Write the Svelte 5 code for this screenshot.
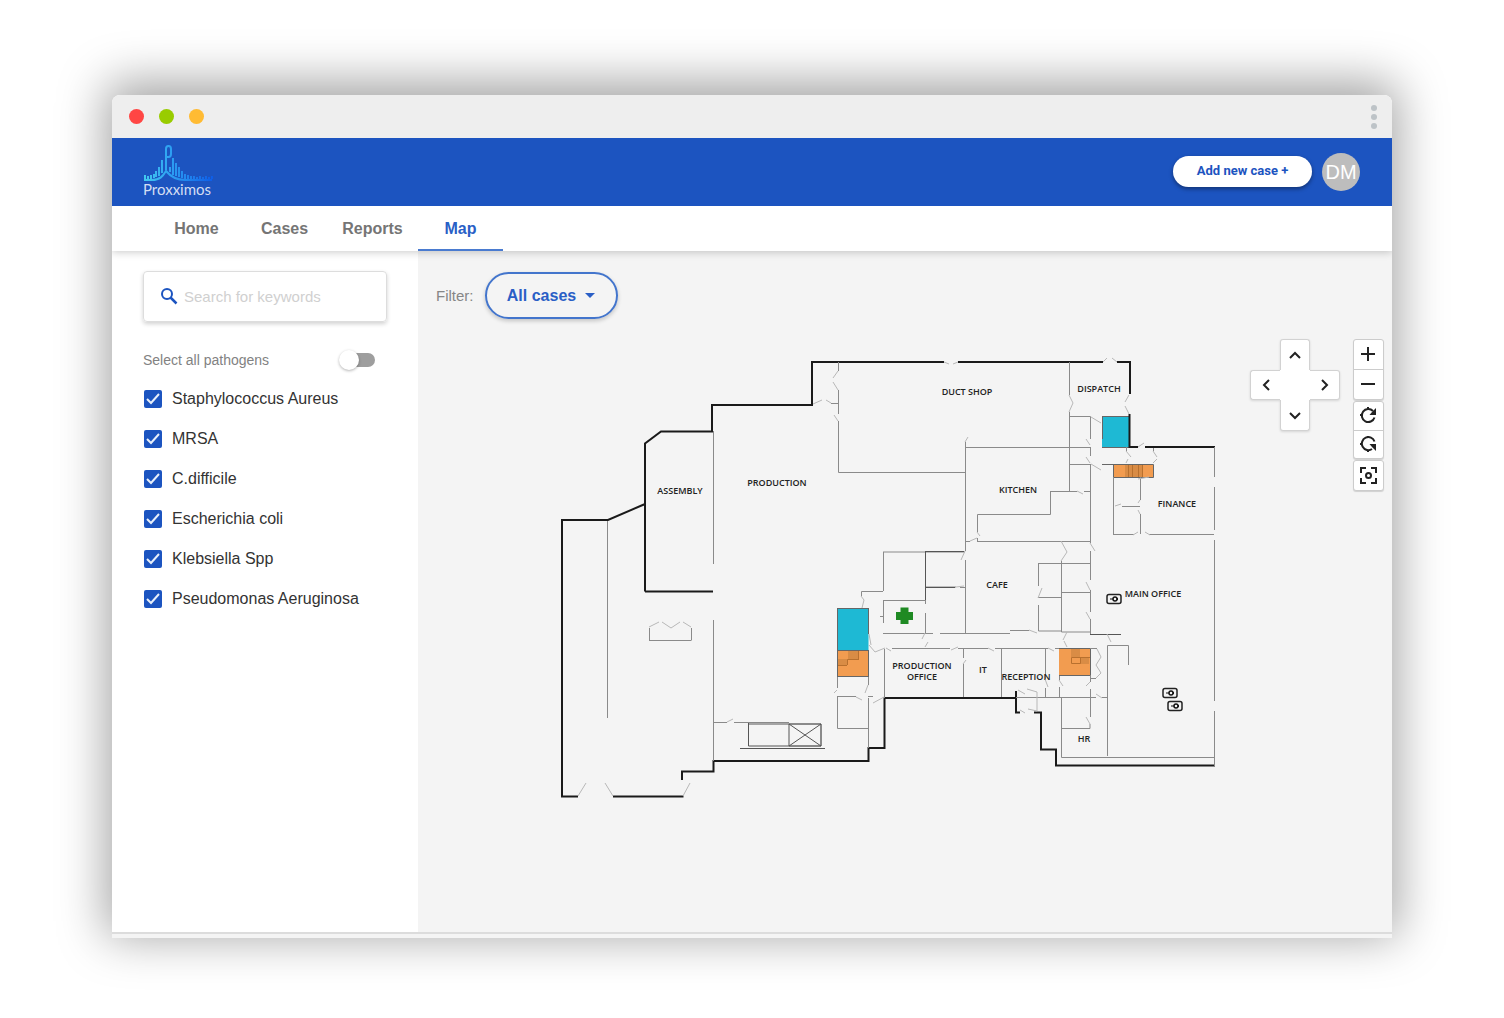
<script>
  const tabs = ['Home', 'Cases', 'Reports', 'Map'];
  let activeTab = $state('Map');
  let allSelected = $state(false);
  let pathogens = $state([
    { name: 'Staphylococcus Aureus', on: true },
    { name: 'MRSA', on: true },
    { name: 'C.difficile', on: true },
    { name: 'Escherichia coli', on: true },
    { name: 'Klebsiella Spp', on: true },
    { name: 'Pseudomonas Aeruginosa', on: true }
  ]);

  const rooms = [
    { name: 'ASSEMBLY', x: 680, y: 494 },
    { name: 'PRODUCTION', x: 777, y: 486 },
    { name: 'DUCT SHOP', x: 967, y: 395 },
    { name: 'DISPATCH', x: 1099, y: 392 },
    { name: 'KITCHEN', x: 1018, y: 493 },
    { name: 'FINANCE', x: 1177, y: 507 },
    { name: 'CAFE', x: 997, y: 588 },
    { name: 'MAIN OFFICE', x: 1153, y: 597 },
    { name: 'PRODUCTION', x: 922, y: 669 },
    { name: 'OFFICE', x: 922, y: 680 },
    { name: 'IT', x: 983, y: 673 },
    { name: 'RECEPTION', x: 1026, y: 680 },
    { name: 'HR', x: 1084, y: 742 }
  ];

  const cameras = [
    { x: 1114, y: 599 },
    { x: 1170, y: 693 },
    { x: 1175, y: 706 }
  ];
</script>

<div class="window">
  <div class="chrome">
    <div class="lights"><i class="red"></i><i class="green"></i><i class="amber"></i></div>
    <div class="kebab"><i></i><i></i><i></i></div>
  </div>

  <header>
    <a class="logo" href="#home" aria-label="Proxximos home">
      <svg viewBox="0 0 70 36" width="70" height="36" fill="none" aria-hidden="true">
        <defs>
          <linearGradient id="wave" gradientUnits="userSpaceOnUse" x1="0" y1="0" x2="70" y2="0">
            <stop offset="0" stop-color="#42c9ee" />
            <stop offset="0.4" stop-color="#2c9df2" />
            <stop offset="1" stop-color="#0d5be6" />
          </linearGradient>
        </defs>
        <g stroke="url(#wave)">
          <path stroke-width="2" d="M22 25V4Q22 1 24.500 1T27 4V9Q27 12 24.500 12H23" />
          <path stroke-width="2" d="M0 35H8C16 35 19 31 22 26C27 32 33 35 41 35H68" />
          <path stroke-width="2" d="M1 30V34M4 31V34M7 30V34M10 29V33M12 26V32M15 22V31M18 15V28M26 22V27M29 13V30M32 18V31M35 22V32M38 26V33M41 29V34M44 30V34M47 31V34M50 31V34M53 32V34M56 31V34M59 32V34M62 31V34M65 32V34M68 31V34" />
        </g>
      </svg>
      <span>Proxximos</span>
    </a>
    <button class="add">Add new case +</button>
    <button class="avatar" aria-label="Account DM">DM</button>
  </header>

  <nav>
    {#each tabs as tab}
      <a href={'#' + tab.toLowerCase()} class:active={tab === activeTab} onclick={() => (activeTab = tab)}>{tab}</a>
    {/each}
  </nav>

  <div class="body">
    <aside>
      <label class="search">
        <svg viewBox="0 0 18 18" width="18" height="18" fill="none" stroke="#1c54c0" stroke-width="2" aria-hidden="true">
          <circle cx="7" cy="6" r="5" /><path d="M10.500 9.500L16.500 15.500" stroke-width="2.500" />
        </svg>
        <input type="text" placeholder="Search for keywords" aria-label="Search for keywords" />
      </label>
      <label class="all">
        <span>Select all pathogens</span>
        <input type="checkbox" role="switch" bind:checked={allSelected} />
      </label>
      <ul>
        {#each pathogens as p}
          <li>
            <label>
              <span class="tick">
                <input type="checkbox" bind:checked={p.on} />
                <svg viewBox="0 0 18 18" width="18" height="18" fill="none" stroke="#e8effa" stroke-width="2" aria-hidden="true"><path d="M3 9L7 13L15 4" /></svg>
              </span>
              {p.name}
            </label>
          </li>
        {/each}
      </ul>
    </aside>

    <main>
      <div class="toolbar">
        <span>Filter:</span>
        <button class="filter">All cases
          <svg viewBox="0 0 10 5" width="10" height="5" aria-hidden="true"><path d="M0 0H10L5 5Z" fill="#2a5fc6" /></svg>
        </button>
      </div>

      <div class="map">
        <svg class="plan" viewBox="550 339 680 470" fill="none" role="img" aria-label="Building floor plan">
          <g class="zones">
            <path fill="#1eb9d4" d="M837 608H868.500V650H837ZM1102 416.500H1129V447.500H1102Z" />
            <path fill="#f29c50" d="M837 650H868.500V676H837ZM1113 464.500H1153V477H1113ZM1059 648.500H1090.500V675.500H1059Z" />
            <path fill="#d98c45" d="M848 651H858V659H848V665H838V659H848ZM1125 465H1143V477H1125ZM1071 649H1080V657H1089V664H1080V657H1071Z" />
            <path stroke="#b8702e" d="M847.500 665V659.500H858.500M858.500 650V660M838 665.500H847M1128.500 465V477M1132.500 465V477M1138.500 465V477M1142.500 465V477M1071.500 657.500H1080.500V663.500H1071.500ZM1080 657.500H1090" />
            <path stroke="#666" d="M837.500 608V650M837 608.500H869M837 650.500H869M868.500 608V634M837.500 650V677M837 676.500H869M868.500 650V677M1102 416.500H1129M1102.500 416V439M1102 447.500H1129M1102 464.500H1153.500V477.500H1113.500V464M1059 648.500H1090.500V675.500H1059" />
          </g>

          <path class="outer" d="M578 796.500H562V520H608L645 504M645 591.500V443.500L661 431.500H712V405H812V362H838M645 591.500H713M613 796.500H683.500M682 780V771.500H713.500V761H868.500V748H884.500V698H1016M1016 691V712.500H1020M1034 712.500H1041V749.500H1056V765.500H1215M838 362H944M958 362H1103M1117 362H1130V394M1129.500 414V447H1138M1145 447H1215" />

          <path class="wall" d="M607.500 521V718M713.500 431V564M713.500 620V761M838.500 362V371M838.500 390V414M838.500 421V472.500H965M831 403.500H838M965.500 442V551M965 447.500H1090M1069.500 362V395M1069.500 412V491M1069 416.500H1090.500V439M1069 464.500H1090M1090.500 447V456M1090.500 464V543M1050.500 491.500V514.500H977.500V532M1050 491.500H1077M1084 491.500H1091M977.500 538V541.500M977 541.500H1090M965 541.500H970M883 552H965M883.500 552V591M883 591.500H861.500V596M883 600.500H926M883.500 600V623M883 633.500H933M940 633.500H1010M1010 630.500H1029M880 616.500H883M925.500 552V604M925.500 613V633M925 587H956M960 587.500H965M965.500 560V633M1038.500 563.500V586M1038 563.500H1090M1038.500 605V631H1061M1038 597.500H1061M1061.500 561V632H1090M1061 592.500H1090M1090.500 551V580M1090.500 590V612M1090.500 619V634M1090 634.500H1121M1107.500 756V645.500H1128.500V665M1214.500 447V477M1214.500 487V530M1214.500 540V701M1214.500 711V766M884.500 649V698M892 648.500H950M963.500 649V658M963.500 664V697M958 648.500H988M995 648.500H1048M963 648.500H966M1001.500 649V697M1045.500 649V679M1045.500 688V697M1016 697.500H1096M1102 697.500H1107M1061.500 697V757.500H1214M1061 728.500H1090V724M1090.500 676V682M1090.500 689V717M1059.500 676V680M1059.500 687V697M1055 648.500H1059M1090 648.500H1097M1090 678.500H1096M837.500 677V688M868.500 677V685M868.500 698V748M838 696.500H856M868 696.500H873M837.500 696V728.500H868M1113.500 477V535M1140.500 477V500M1140.500 514V534M1122 506.500H1140M1113 534.500H1134M1149 534.500H1214M1126.500 447V451M1153.500 448V451M713 722.500H727M734 722.500H789M789 724H821V746H789" />
          <path class="wall strong" d="M748.500 723V746H789V724M740 748.500H825M748 724H789M925.500 552V600M925 587.500H955M925 551.500H964M1090 634.500H1121" />
          <path class="wall strong" d="M789 724L821 746M821 724L789 746M789 724H821V746H789" />
          <path class="wall" d="M649 640.500H691.500M649.500 628V640M691.500 628V640" />

          <path class="door" d="M578 796L586 783M605 783L613 796M683 796L690 783M649 627L659 622M662 622L671 628L680 622M683 622L691 627M838 371L833 378M833 382L838 390M813 404L822 400M826 400L831 403M834 415L838 421M944 362L949 364M953 364L958 362M965 442L968 437M1103 362L1107 358M1112 358L1117 362M1069 395L1073 403L1069 412M1129 395L1125 402M1125 406L1129 414M1091 417L1101 423M1086 439L1090 445M1086 457L1090 463M1091 464L1101 470M1077 491L1083 494M977 532L980 536M970 541L977 538M965 551L961 560M1061 541L1067 552L1061 561M1090 543L1095 551M1138 447L1144 443M1126 451L1131 457M1128 459L1126 463M1153 451L1157 457M1157 459L1153 463M1138 479L1149 477M1140 500L1138 503M1138 510L1140 514M1115 506L1121 504M1133 535L1138 532M1145 532L1150 535M861 596L864 600L862 608M869 634L871 645M869 645L875 652L885 648M886 648L891 651M925 633L922 639M928 642L925 647M951 650L958 647M963 664L966 660M988 648L994 651M956 587L964 586M1029 630L1037 633M1042 588L1038 598M1086 582L1090 590M1086 612L1090 619M1107 634L1111 642M1048 648L1054 651M1067 632L1063 640M1064 641L1067 647M1097 649L1101 657L1096 665L1101 673L1096 678M1059 680L1063 686M1090 682L1086 686M1045 679L1048 687M1096 694L1102 698M1086 717L1090 724M868 685L865 693M837 690L834 693M856 697L862 700M873 703L884 697M1018 690L1025 694M1027 689L1037 692V711L1028 709M1020 710L1025 713M727 722L733 719" />

          <path fill="#1f8a23" d="M900.500 607.500H908.500V612H913V620H908.500V624H900.500V620H896V612H900.500Z" />

          {#each cameras as c}
            <g transform={`translate(${c.x} ${c.y})`}>
              <rect x="-7" y="-4.500" width="14" height="9" rx="2" stroke="#222" stroke-width="1.500" />
              <circle cx="1" cy="0" r="2" stroke="#111" stroke-width="1.500" /><path stroke="#111" d="M-4 0H-1M2 -2L4 0L2 2" />
            </g>
          {/each}

          {#each rooms as r}
            <text x={r.x} y={r.y}>{r.name}</text>
          {/each}
        </svg>

        <div class="pan">
          <button class="up" aria-label="Pan up"><svg viewBox="0 0 12 12"><path d="M1 9L6 4L11 9" /></svg></button>
          <button class="left" aria-label="Pan left"><svg viewBox="0 0 12 12"><path d="M9 1L4 6L9 11" /></svg></button>
          <span class="hub"></span>
          <button class="right" aria-label="Pan right"><svg viewBox="0 0 12 12"><path d="M3 1L8 6L3 11" /></svg></button>
          <button class="down" aria-label="Pan down"><svg viewBox="0 0 12 12"><path d="M1 4L6 9L11 4" /></svg></button>
        </div>

        <div class="tools">
          <div class="group">
            <button aria-label="Zoom in"><svg viewBox="0 0 18 18"><path d="M1 8H15M8 1V15" /></svg></button>
            <button aria-label="Zoom out"><svg viewBox="0 0 18 18"><path d="M1 8H15" /></svg></button>
          </div>
          <div class="group turn">
            <button aria-label="Rotate clockwise"><svg viewBox="0 0 18 18"><path d="M13 4A6.500 6.500 0 1 0 14.500 10.500" /><path class="solid" d="M16 1V8H9.500L12 5Z" /><path d="M8 0V2M8 14V16M0 8H2" /></svg></button>
            <button aria-label="Rotate counterclockwise"><svg viewBox="0 0 18 18"><path d="M14.500 5.500A6.500 6.500 0 1 0 12 13" /><path class="solid" d="M16 15V8H9.500L12 11Z" /><path d="M8 0V2M8 14V16M0 8H2" /></svg></button>
          </div>
          <div class="group">
            <button aria-label="Fit to view"><svg viewBox="0 0 18 18"><path d="M1 6V1H6M11 1H16V6M16 11V16H11M6 16H1V11" /><circle cx="8.500" cy="8.500" r="2.500" /></svg></button>
          </div>
        </div>
      </div>
    </main>
  </div>
  <footer></footer>
</div>

<style>
  :global(body) { margin: 0; background: #fff; }
  .window, .window :global(*) { box-sizing: border-box; }
  .window {
    display: flex;
    flex-direction: column;
    min-height: calc(100vh - 175px);
    margin: 95px 112px 80px;
    border-radius: 8px 8px 0 0;
    background: #fff;
    box-shadow: 0 -7px 48px 6px rgba(0, 0, 0, 0.36);
    font-family: "Liberation Sans", Arial, sans-serif;
    color: #333;
  }
  button { padding: 0; border: 0; background: none; font: inherit; cursor: pointer; }
  a { text-decoration: none; }

  .chrome {
    display: flex;
    align-items: center;
    justify-content: space-between;
    height: 43px;
    padding: 0 15px 0 17px;
    border-radius: 8px 8px 0 0;
    background: #eee;
  }
  .lights { display: flex; gap: 15px; }
  .lights i { width: 15px; height: 15px; border-radius: 50%; }
  .red { background: #ff4644; }
  .green { background: #9c0; }
  .amber { background: #fb3; }
  .kebab { display: flex; flex-direction: column; gap: 3px; }
  .kebab i { width: 6px; height: 6px; border-radius: 50%; background: #bdc3c7; }

  header {
    display: flex;
    align-items: center;
    height: 68px;
    padding: 0 32px 1px 31px;
    background: #1c54c0;
  }
  .logo { display: flex; flex-direction: column; margin-right: auto; color: #d3def3; }
  .logo svg { margin-left: 1px; }
  .logo span { font: 400 15px/17px Lato, sans-serif; }
  .add {
    min-width: 139px;
    height: 31px;
    padding: 0 20px 2px;
    border-radius: 16px;
    background: #fff;
    box-shadow: 0 2px 4px rgba(0, 0, 0, 0.4);
    color: #1c54c0;
    font: bold 13px/16px Roboto, sans-serif;
  }
  .avatar {
    width: 38px;
    height: 38px;
    margin-left: 10px;
    border-radius: 50%;
    background: #bdbdbd;
    color: #fff;
    font-size: 20px;
    line-height: 38px;
  }

  nav {
    position: relative;
    display: flex;
    gap: 3px;
    height: 45px;
    padding-left: 42px;
    background: #fff;
    box-shadow: 0 1px 8px rgba(0, 0, 0, 0.22);
    clip-path: inset(0 0 -12px 0);
  }
  nav a {
    width: 85px;
    border-bottom: 2px solid transparent;
    color: #757575;
    font-size: 16px;
    font-weight: bold;
    line-height: 45px;
    text-align: center;
  }
  nav a.active { border-color: #4a7bd0; color: #2a5fc6; }

  .body { display: flex; flex: 1; }
  aside { width: 306px; padding: 20px 31px; background: #fff; }
  .search {
    display: flex;
    align-items: center;
    gap: 6px;
    height: 51px;
    padding: 0 16px;
    border: 1px solid #ddd;
    border-radius: 4px;
    box-shadow: 0 2px 4px rgba(0, 0, 0, 0.18);
  }
  .search svg { flex: none; }
  .search input { width: 100%; min-width: 0; padding: 0; border: 0; outline: 0; background: none; font: 15px/20px "Liberation Sans", Arial, sans-serif; }
  .search input::placeholder { color: #d0d0d0; opacity: 1; }
  .all {
    display: flex;
    align-items: center;
    justify-content: space-between;
    height: 22px;
    margin: 27px 12px 8px 0;
    color: #828282;
    font-size: 14px;
  }
  .all input {
    appearance: none;
    display: flex;
    align-items: center;
    width: 32px;
    height: 14px;
    margin: 0;
    border-radius: 7px;
    background: #9e9e9e;
  }
  .all input::before {
    content: "";
    width: 20px;
    height: 20px;
    margin-left: -4px;
    border-radius: 50%;
    background: #fff;
    box-shadow: 0 1px 3px rgba(0, 0, 0, 0.3);
  }
  .all input:checked::before { margin-left: 16px; }
  ul { margin: 0; padding: 0; list-style: none; }
  li { display: flex; align-items: center; height: 40px; }
  li + li { margin-top: 0; }
  li:nth-child(n + 3) { position: static; }
  li label { display: flex; align-items: center; gap: 10px; padding-left: 1px; font-size: 16px; color: #333; }
  .tick { display: grid; }
  .tick input { appearance: none; width: 18px; height: 18px; margin: 0; border-radius: 2px; grid-area: 1 / 1; box-shadow: inset 0 0 0 2px #757575; }
  .tick input:checked { background: #1c54c0; box-shadow: none; }
  .tick svg { grid-area: 1 / 1; pointer-events: none; }

  main { flex: 1; min-width: 0; background: #f4f4f4; }
  .toolbar { display: flex; align-items: center; gap: 11px; padding: 21px 18px 0; color: #868686; font-size: 15px; }
  .filter {
    display: flex;
    align-items: center;
    justify-content: center;
    gap: 9px;
    width: 133px;
    height: 47px;
    border: 2px solid #4375cc;
    border-radius: 24px;
    box-shadow: 0 2px 4px rgba(0, 0, 0, 0.2);
    color: #2a5fc6;
    font-size: 16px;
    font-weight: bold;
  }

  .map { display: flex; align-items: flex-start; padding: 20px 8px 0 132px; }
  .plan { flex: 1; min-width: 0; }
  .outer { stroke: #1a1a1a; stroke-width: 2; }
  .wall { stroke: #8a8a8a; stroke-width: 1; }
  .strong { stroke: #555; }
  .door { stroke: #b8b8b8; stroke-width: 1; }
  .plan text { fill: #222; font: 600 9px "Open Sans", sans-serif; text-anchor: middle; }

  .pan { display: grid; grid-template-columns: 30px 30px 30px; grid-template-rows: 31px 30px 31px; margin: 0 13px 0 20px; filter: drop-shadow(0 1px 1px rgba(0, 0, 0, 0.12)); }
  .pan button { display: grid; place-items: center; border: 1px solid #d2d2d2; background: #fff; }
  .pan svg { width: 12px; height: 12px; fill: none; stroke: #222; stroke-width: 2; }
  .up { grid-area: 1 / 2; }
  .left { grid-area: 2 / 1; }
  .hub { grid-area: 2 / 2; background: #fff; }
  .right { grid-area: 2 / 3; }
  .down { grid-area: 3 / 2; }
  .pan .up { border-bottom: 0; border-radius: 3px 3px 0 0; }
  .pan .left { border-right: 0; border-radius: 3px 0 0 3px; }
  .pan .right { border-left: 0; border-radius: 0 3px 3px 0; }
  .pan .down { border-top: 0; border-radius: 0 0 3px 3px; }

  .tools { display: flex; flex-direction: column; gap: 1px; }
  .group { border: 1px solid #ccc; border-radius: 3px; background: #fff; box-shadow: 0 1px 1px rgba(0, 0, 0, 0.15); }
  .group button { display: grid; place-items: center; width: 29px; height: 29px; }
  .group.turn button { height: 28px; }
  .group button + button { border-top: 1px solid #ccc; height: 30px; }
  .group svg { width: 18px; height: 18px; fill: none; stroke: #222; stroke-width: 2; }
  .group .solid { fill: #222; stroke: none; }

  footer { height: 6px; border-top: 2px solid #dcdcdc; background: #f4f4f4; }
</style>
